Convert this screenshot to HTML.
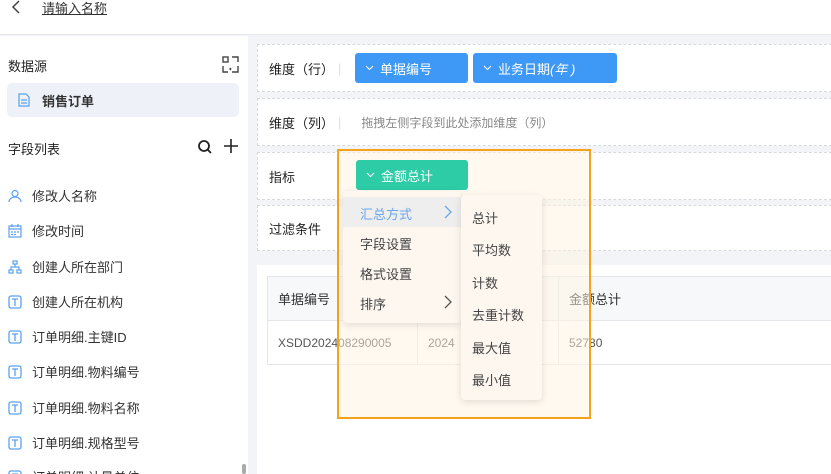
<!DOCTYPE html><html><head><meta charset="utf-8"><style>
*{box-sizing:border-box;margin:0;padding:0}
html,body{width:831px;height:474px;overflow:hidden}
body{background:#f3f4f7;font-family:"Liberation Sans","Noto Sans CJK SC",sans-serif;color:#222;position:relative}
.a{position:absolute}
.hdr{left:0;top:0;width:831px;height:35px;background:#fff;border-bottom:1px solid #e8e8ec}
.left{left:0;top:36px;width:248px;height:438px;background:#fff;overflow:hidden}
.fi{position:absolute;left:8px;font-size:13px;color:#333;display:flex;align-items:center}
.fi svg{margin-right:10px}
.card{position:absolute;left:257px;width:600px;background:#fff;border:1px dashed #d8d9de;font-size:13px}
.card .lb{position:absolute;left:11px;top:0;height:100%;display:flex;align-items:center}
.tag{position:absolute;height:30px;border-radius:3px;color:#fff;font-size:13px;display:flex;align-items:center;padding-left:10px}
.tag svg{margin-right:6px}
.tbl{left:257px;top:265px;width:600px;height:209px;background:#fff}
.cell{position:absolute;font-size:12px;color:#555;display:flex;align-items:center;padding-left:10px;border-right:1px solid #e4e6ea;border-bottom:1px solid #e4e6ea}
.mi{position:absolute;font-size:13px;color:#444}
</style></head><body>
<div class="a hdr">
<svg class="a" style="left:10px;top:0" width="12" height="14" viewBox="0 0 12 14"><path d="M9 1L3 7l6 6" fill="none" stroke="#444" stroke-width="1.5"/></svg>
<div class="a" style="left:42px;top:-2px;font-size:13px;color:#333;text-decoration:underline">请输入名称</div>
</div>
<div class="a left">
<div class="a" style="left:8px;top:20px;font-size:13px">数据源</div>
<svg class="a" style="left:222px;top:20px" width="17" height="17" viewBox="0 0 17 17" fill="none" stroke="#444" stroke-width="1.4"><rect x="1" y="1" width="5" height="5"/><path d="M10 1h6v5M1 10v6h5M16 10v6h-6"/><path d="M9 12l-1 1 1 1"/></svg>
<div class="a" style="left:7px;top:47px;width:232px;height:34px;background:#eef2f8;border-radius:5px"></div>
<svg class="a" style="left:18px;top:57px" width="12" height="14" viewBox="0 0 12 14" fill="none" stroke="#5aa0f0" stroke-width="1.2"><path d="M1 1h7l3 3v9H1z"/><path d="M3 7h6M3 10h6"/></svg>
<div class="a" style="left:42px;top:55px;font-size:13px;font-weight:bold;color:#333">销售订单</div>
<div class="a" style="left:8px;top:103px;font-size:13px">字段列表</div>
<svg class="a" style="left:197px;top:103px" width="16" height="16" viewBox="0 0 16 16" fill="none" stroke="#222" stroke-width="1.8"><circle cx="7" cy="7" r="5"/><path d="M11 11l3 3"/></svg>
<svg class="a" style="left:223px;top:102px" width="16" height="16" viewBox="0 0 16 16" stroke="#222" stroke-width="1.6"><path d="M8 1v14M1 8h14"/></svg>
<div class="fi" style="top:150px"><svg width="14" height="14" viewBox="0 0 14 14" fill="none" stroke="#5aa0f0" stroke-width="1.2"><circle cx="7" cy="4.5" r="3"/><path d="M1 13c0-3 3-5 6-5s6 2 6 5"/></svg>修改人名称</div>
<div class="fi" style="top:185px"><svg width="14" height="14" viewBox="0 0 14 14" fill="none" stroke="#5aa0f0" stroke-width="1.2"><rect x="1" y="2" width="12" height="11"/><path d="M1 5h12M4 0v3M10 0v3M3 8h2M6 8h2M9 8h2M3 10.5h2M6 10.5h2"/></svg>修改时间</div>
<div class="fi" style="top:221px"><svg width="14" height="14" viewBox="0 0 14 14" fill="none" stroke="#5aa0f0" stroke-width="1.2"><rect x="5" y="1" width="4" height="3"/><rect x="1" y="10" width="4" height="3"/><rect x="9" y="10" width="4" height="3"/><path d="M7 4v3M3 10V7h8v3"/></svg>创建人所在部门</div>
<div class="fi" style="top:256px"><svg width="14" height="14" viewBox="0 0 14 14" fill="none" stroke="#5aa0f0" stroke-width="1.3"><rect x="1" y="1" width="12" height="12" rx="2"/><path d="M4 4h6M7 4v7"/></svg>创建人所在机构</div>
<div class="fi" style="top:291px"><svg width="14" height="14" viewBox="0 0 14 14" fill="none" stroke="#5aa0f0" stroke-width="1.3"><rect x="1" y="1" width="12" height="12" rx="2"/><path d="M4 4h6M7 4v7"/></svg>订单明细.主键ID</div>
<div class="fi" style="top:326px"><svg width="14" height="14" viewBox="0 0 14 14" fill="none" stroke="#5aa0f0" stroke-width="1.3"><rect x="1" y="1" width="12" height="12" rx="2"/><path d="M4 4h6M7 4v7"/></svg>订单明细.物料编号</div>
<div class="fi" style="top:362px"><svg width="14" height="14" viewBox="0 0 14 14" fill="none" stroke="#5aa0f0" stroke-width="1.3"><rect x="1" y="1" width="12" height="12" rx="2"/><path d="M4 4h6M7 4v7"/></svg>订单明细.物料名称</div>
<div class="fi" style="top:397px"><svg width="14" height="14" viewBox="0 0 14 14" fill="none" stroke="#5aa0f0" stroke-width="1.3"><rect x="1" y="1" width="12" height="12" rx="2"/><path d="M4 4h6M7 4v7"/></svg>订单明细.规格型号</div>
<div class="fi" style="top:431px"><svg width="14" height="14" viewBox="0 0 14 14" fill="none" stroke="#5aa0f0" stroke-width="1.3"><rect x="1" y="1" width="12" height="12" rx="2"/><path d="M4 4h6M7 4v7"/></svg>订单明细.计量单位</div>
<div class="a" style="left:242px;top:428px;width:4px;height:10px;background:#aaa;border-radius:2px"></div>
</div>

<div class="card" style="top:44px;height:48px"><div class="lb">维度（行）<span style="color:#ddd;margin-left:4px">|</span></div></div>
<div class="tag" style="left:355px;top:53px;width:113px;background:#3d99f5"><svg width="9" height="6" viewBox="0 0 9 6"><path d="M1 1l3.5 3.5L8 1" fill="none" stroke="#fff" stroke-width="1.1"/></svg>单据编号</div>
<div class="tag" style="left:473px;top:53px;width:144px;background:#3d99f5"><svg width="9" height="6" viewBox="0 0 9 6"><path d="M1 1l3.5 3.5L8 1" fill="none" stroke="#fff" stroke-width="1.1"/></svg>业务日期 <i>(年 )</i></div>
<div class="card" style="top:98px;height:48px"><div class="lb">维度（列）<span style="color:#ddd;margin-left:4px">|</span><span style="color:#888;font-size:12px;margin-left:20px">拖拽左侧字段到此处添加维度（列）</span></div></div>
<div class="card" style="top:152px;height:48px"><div class="lb">指标</div></div>
<div class="card" style="top:205px;height:46px"><div class="lb">过滤条件</div></div>

<div class="a tbl">
<div class="cell" style="left:10px;top:11px;width:151px;height:45px;background:#f7f8fa;font-size:13px;color:#333;border-top:1px solid #e4e6ea;border-left:1px solid #e4e6ea">单据编号</div>
<div class="cell" style="left:161px;top:11px;width:141px;height:45px;background:#f7f8fa;border-top:1px solid #e4e6ea"></div>
<div class="cell" style="left:302px;top:11px;width:300px;height:45px;background:#f7f8fa;font-size:13px;color:#333;border-top:1px solid #e4e6ea">金额总计</div>
<div class="cell" style="left:10px;top:56px;width:151px;height:44px;border-left:1px solid #e4e6ea">XSDD202408290005</div>
<div class="cell" style="left:161px;top:56px;width:141px;height:44px">2024</div>
<div class="cell" style="left:302px;top:56px;width:300px;height:44px">52780</div>
</div>

<div class="a" style="left:337px;top:149px;width:254px;height:270px;border:2px solid #f5a31a;background:rgba(255,244,225,.5)"></div>
<div class="tag" style="left:356px;top:160px;width:112px;background:#2ecba7"><svg width="9" height="6" viewBox="0 0 9 6"><path d="M1 1l3.5 3.5L8 1" fill="none" stroke="#fff" stroke-width="1.1"/></svg>金额总计</div>
<div class="a" style="left:343px;top:191px;width:118px;height:132px;background:#fdf7ef;border-radius:4px;box-shadow:0 2px 8px rgba(0,0,0,.12)"></div>
<div class="a" style="left:343px;top:197px;width:118px;height:30px;background:#eeeeee"></div>
<div class="mi" style="left:360px;top:204px;color:#6aa6ee">汇总方式</div>
<svg class="a" style="left:443px;top:205px" width="10" height="14" viewBox="0 0 10 14"><path d="M2 1l6 6-6 6" fill="none" stroke="#6aa6ee" stroke-width="1.3"/></svg>
<div class="mi" style="left:360px;top:234px">字段设置</div>
<div class="mi" style="left:360px;top:264px">格式设置</div>
<div class="mi" style="left:360px;top:294px">排序</div>
<svg class="a" style="left:443px;top:295px" width="10" height="14" viewBox="0 0 10 14"><path d="M2 1l6 6-6 6" fill="none" stroke="#555" stroke-width="1.3"/></svg>
<div class="a" style="left:461px;top:195px;width:81px;height:205px;background:#fdf7ef;border-radius:4px;box-shadow:0 2px 8px rgba(0,0,0,.12)"></div>
<div class="mi" style="left:472px;top:208px">总计</div>
<div class="mi" style="left:472px;top:240px">平均数</div>
<div class="mi" style="left:472px;top:273px">计数</div>
<div class="mi" style="left:472px;top:305px">去重计数</div>
<div class="mi" style="left:472px;top:338px">最大值</div>
<div class="mi" style="left:472px;top:370px">最小值</div>
</body></html>
